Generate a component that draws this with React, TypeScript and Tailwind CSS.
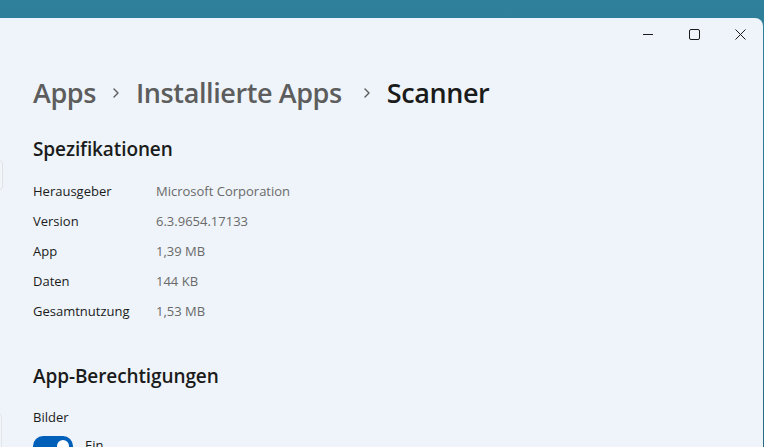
const specs: ReadonlyArray<[string, string]> = [
  ["Herausgeber", "Microsoft Corporation"],
  ["Version", "6.3.9654.17133"],
  ["App", "1,39 MB"],
  ["Daten", "144 KB"],
  ["Gesamtnutzung", "1,53 MB"],
];

function Chevron({ className }: { className: string }) {
  return (
    <svg width="10" height="14" viewBox="0 0 10 14" className={className}>
      <path d="M3 3l4 4-4 4" fill="none" stroke="#5c5c5c" strokeWidth="1.4" strokeLinecap="round" strokeLinejoin="round" />
    </svg>
  );
}

export default function App() {
  return (
    <div
      className="h-[447px] w-[764px] overflow-hidden bg-gradient-to-b from-[#2f809b] to-[#286c84]"
      style={{ fontFamily: '"Open Sans", "Noto Sans", sans-serif' }}
    >
      <div className="mt-[18px] h-[429px] w-[763px] rounded-tr-[8px] bg-[#eef4f9]">
        <div className="flex h-[32px] items-center justify-end">
          <button className="flex h-[32px] w-[46px] items-center justify-center">
            <svg width="10" height="10" viewBox="0 0 10 10">
              <path d="M0 5.5h10" stroke="#1b1b1b" strokeWidth="1" />
            </svg>
          </button>
          <button className="flex h-[32px] w-[46px] items-center justify-center">
            <svg width="11" height="11" viewBox="0 0 11 11">
              <rect x="0.5" y="0.5" width="10" height="10" rx="1.5" fill="none" stroke="#1b1b1b" strokeWidth="1" />
            </svg>
          </button>
          <button className="flex h-[32px] w-[46px] items-center justify-center">
            <svg width="11" height="11" viewBox="0 0 11 11">
              <path d="M0.5 0.5l10 10M10.5 0.5l-10 10" stroke="#1b1b1b" strokeWidth="1" />
            </svg>
          </button>
        </div>

        <div className="relative px-[33px] pt-[25px]">
          <div className="pointer-events-none absolute left-[-6px] top-[110px] h-[30px] w-[9px] rounded-[4px] border border-[#dfe3e7] bg-[#f3f6f9]" />
          <div className="pointer-events-none absolute left-[-6px] top-[363px] h-[40px] w-[8px] rounded-[4px] border border-[#e3e7eb] bg-[#f1f5f9]" />

          <nav className="flex items-center text-[27px] font-semibold leading-[36px] tracking-[-0.4px]">
            <span className="text-[#5d5d5d]">Apps</span>
            <Chevron className="mx-[15px]" />
            <span className="text-[#5d5d5d]">Installierte Apps</span>
            <Chevron className="ml-[20px] mr-[15px]" />
            <span className="text-[#1b1b1b]">Scanner</span>
          </nav>

          <h2 className="mt-[24px] text-[19px] font-semibold leading-[28px] tracking-[-0.1px] text-[#1b1b1b]">Spezifikationen</h2>

          <dl className="mt-[13px] text-[13px] leading-[30px]">
            {specs.map(([label, value]) => (
              <div key={label} className="flex">
                <dt className="w-[123px] text-[#1b1b1b]">{label}</dt>
                <dd className="text-[#6a6a6a]">{value}</dd>
              </div>
            ))}
          </dl>

          <h2 className="mt-[36px] text-[19px] font-semibold leading-[28px] tracking-[-0.1px] text-[#1b1b1b]">App-Berechtigungen</h2>

          <p className="mt-[17px] text-[13px] leading-[20px] text-[#1b1b1b]">Bilder</p>
          <div className="mt-[9px] flex items-center gap-[12px]">
            <div className="flex h-[20px] w-[40px] items-center justify-end rounded-full bg-[#005fb8] px-[4px]">
              <div className="h-[12px] w-[12px] rounded-full bg-white" />
            </div>
            <span className="text-[13px] text-[#1b1b1b]">Ein</span>
          </div>
        </div>
      </div>
    </div>
  );
}
